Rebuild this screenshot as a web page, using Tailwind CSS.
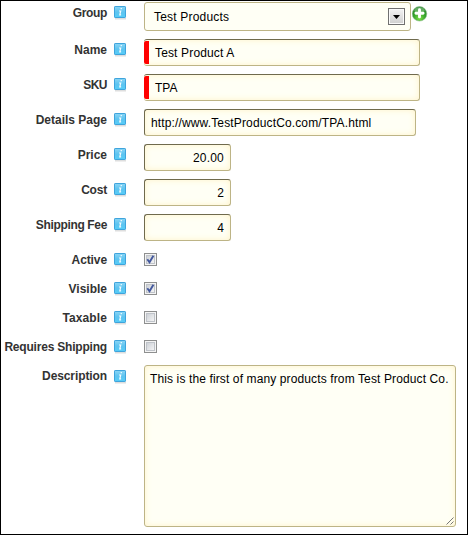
<!DOCTYPE html>
<html lang="en"><head><meta charset="utf-8"><title>Product</title>
<script src="https://cdn.jsdelivr.net/npm/@tailwindcss/browser@4"></script></head>
<body class="bg-white">
<svg class="absolute size-0">
<defs>
<linearGradient id="blue" x1="0" y1="0" x2="0" y2="1"><stop offset="0" stop-color="#8ad5f5"/><stop offset=".5" stop-color="#5fc4f0"/><stop offset="1" stop-color="#55cdf8"/></linearGradient>
<linearGradient id="box" x1="0" y1="0" x2="1" y2="1"><stop offset="0" stop-color="#cbcfd5"/><stop offset="1" stop-color="#f6f6f6"/></linearGradient>
<radialGradient id="green" cx=".5" cy=".8" r=".75"><stop offset="0" stop-color="#7ee04a"/><stop offset=".55" stop-color="#35a12b"/><stop offset="1" stop-color="#2b8a2e"/></radialGradient>
</defs>
<symbol id="info" viewBox="0 0 14 14"><rect x="1" y="12" width="11" height="1.5" fill="#dedede"/><rect x=".5" y=".5" width="11" height="11" rx=".6" fill="url(#blue)" stroke="#3ea4dc"/><path d="M6.6 2.7h1.3M5 5h1.7L5.8 8.9h1.3" fill="none" stroke="#f4fcff" stroke-width="1.2"/></symbol>
<symbol id="check" viewBox="0 0 13 13"><rect x=".5" y=".5" width="12" height="12" fill="#f4f4f4" stroke="#8e8f8f"/><rect x="2.5" y="2.5" width="8" height="8" fill="url(#box)" stroke="#bfc3c9"/></symbol>
<symbol id="tick" viewBox="0 0 13 13"><path d="M3.3 6.3L5.5 9.3L9.4 2.8" fill="none" stroke="#43589d" stroke-width="1.9"/></symbol>
</svg>
<form class="flex h-[535px] w-[468px] flex-col border border-black pt-px font-['Liberation_Sans',Arial,sans-serif] text-[12px] leading-[14px] text-black">
<div class="flex h-[37px] shrink-0"><label class="w-[106px] pt-1 text-right font-bold tracking-[-0.35px] whitespace-nowrap text-[#333]">Group</label><svg class="mt-1 ml-[7px] size-[14px]"><use href="#info"/></svg>
<div class="ml-4 flex h-[29px] w-[267px] items-center justify-between rounded-[3px] border border-[#bdb486] bg-[#fffff5] pr-[5px] pl-[9px]"><span class="tracking-[0.2px]">Test Products</span><span class="flex h-[17px] w-[17px] items-center justify-center border border-[#707070] bg-gradient-to-b from-[#f3f3f3] to-[#cfcfcf] shadow-[inset_0_0_0_1px_#fafafa]"><svg class="mt-px h-1 w-[7px]" viewBox="0 0 7 4"><path d="M0 0h7L3.5 4z"/></svg></span></div>
<svg class="mt-1 ml-px size-4" viewBox="0 0 16 16"><circle cx="7.5" cy="7.8" r="7.3" fill="url(#green)" stroke="#8bb78b" stroke-width=".5"/><ellipse cx="7.5" cy="4.2" rx="5" ry="3" fill="#fff" opacity=".25"/><path d="M7.5 3.7v7.2M3.9 7.3h7.2" stroke="#fff" stroke-width="2.9" stroke-linecap="round"/></svg></div>

<div class="flex h-[35px] shrink-0"><label class="w-[106px] pt-1 text-right font-bold whitespace-nowrap text-[#333]">Name</label><svg class="mt-1 ml-[7px] size-[14px]"><use href="#info"/></svg>
<div class="ml-4 flex h-[27px] w-[276px] items-center rounded-[3px] border border-t-[#6f6a4d] border-r-[#bdb486] border-b-[#bdb486] border-l-0 bg-[#fffff5] shadow-[inset_0_0_6px_#fff3c8]"><span class="h-[23px] w-[5px] shrink-0 rounded-l-[2px] bg-[#f00]"></span><span class="pl-[6px] tracking-[0.15px]">Test Product A</span></div></div>

<div class="flex h-[35px] shrink-0"><label class="w-[106px] pt-1 text-right font-bold tracking-[-0.5px] whitespace-nowrap text-[#333]">SKU</label><svg class="mt-1 ml-[7px] size-[14px]"><use href="#info"/></svg>
<div class="ml-4 flex h-[27px] w-[276px] items-center rounded-[3px] border border-t-[#6f6a4d] border-r-[#bdb486] border-b-[#bdb486] border-l-0 bg-[#fffff5] shadow-[inset_0_0_6px_#fff3c8]"><span class="h-[23px] w-[5px] shrink-0 rounded-l-[2px] bg-[#f00]"></span><span class="pl-[6px]">TPA</span></div></div>

<div class="flex h-[35px] shrink-0"><label class="w-[106px] pt-1 text-right font-bold whitespace-nowrap text-[#333]">Details Page</label><svg class="mt-1 ml-[7px] size-[14px]"><use href="#info"/></svg>
<div class="ml-4 flex h-[27px] w-[272px] items-center rounded-[3px] border border-t-[#6f6a4d] border-r-[#bdb486] border-b-[#bdb486] border-l-[#6f6a4d] bg-[#fffff5] pl-[6px] shadow-[inset_0_0_6px_#fff3c8]"><span class="tracking-[0.14px]">http://www.TestProductCo.com/TPA.html</span></div></div>

<div class="flex h-[35px] shrink-0"><label class="w-[106px] pt-1 text-right font-bold whitespace-nowrap text-[#333]">Price</label><svg class="mt-1 ml-[7px] size-[14px]"><use href="#info"/></svg>
<div class="ml-4 flex h-[27px] w-[87px] items-center justify-end rounded-[3px] border border-t-[#6f6a4d] border-r-[#bdb486] border-b-[#bdb486] border-l-[#6f6a4d] bg-[#fffff5] pr-[6px] shadow-[inset_0_0_6px_#fff3c8]"><span class="tracking-[0.2px]">20.00</span></div></div>

<div class="flex h-[35px] shrink-0"><label class="w-[106px] pt-1 text-right font-bold tracking-[-0.2px] whitespace-nowrap text-[#333]">Cost</label><svg class="mt-1 ml-[7px] size-[14px]"><use href="#info"/></svg>
<div class="ml-4 flex h-[27px] w-[87px] items-center justify-end rounded-[3px] border border-t-[#6f6a4d] border-r-[#bdb486] border-b-[#bdb486] border-l-[#6f6a4d] bg-[#fffff5] pr-[6px] shadow-[inset_0_0_6px_#fff3c8]">2</div></div>

<div class="flex h-[35px] shrink-0"><label class="w-[106px] pt-1 text-right font-bold tracking-[-0.35px] whitespace-nowrap text-[#333]">Shipping Fee</label><svg class="mt-1 ml-[7px] size-[14px]"><use href="#info"/></svg>
<div class="ml-4 flex h-[27px] w-[87px] items-center justify-end rounded-[3px] border border-t-[#6f6a4d] border-r-[#bdb486] border-b-[#bdb486] border-l-[#6f6a4d] bg-[#fffff5] pr-[6px] shadow-[inset_0_0_6px_#fff3c8]">4</div></div>

<div class="flex h-[29px] shrink-0"><label class="w-[106px] pt-1 text-right font-bold tracking-[-0.1px] whitespace-nowrap text-[#333]">Active</label><svg class="mt-1 ml-[7px] size-[14px]"><use href="#info"/></svg><svg class="mt-1 ml-4 size-[13px]"><use href="#check"/><use href="#tick"/></svg></div>
<div class="flex h-[29px] shrink-0"><label class="w-[106px] pt-1 text-right font-bold whitespace-nowrap text-[#333]">Visible</label><svg class="mt-1 ml-[7px] size-[14px]"><use href="#info"/></svg><svg class="mt-1 ml-4 size-[13px]"><use href="#check"/><use href="#tick"/></svg></div>
<div class="flex h-[29px] shrink-0"><label class="w-[106px] pt-1 text-right font-bold tracking-[0.1px] whitespace-nowrap text-[#333]">Taxable</label><svg class="mt-1 ml-[7px] size-[14px]"><use href="#info"/></svg><svg class="mt-1 ml-4 size-[13px]"><use href="#check"/></svg></div>
<div class="flex h-[29px] shrink-0"><label class="w-[106px] pt-1 text-right font-bold tracking-[-0.2px] whitespace-nowrap text-[#333]">Requires Shipping</label><svg class="mt-1 ml-[7px] size-[14px]"><use href="#info"/></svg><svg class="mt-1 ml-4 size-[13px]"><use href="#check"/></svg></div>

<div class="flex h-[162px] shrink-0"><label class="w-[106px] pt-1 text-right font-bold tracking-[-0.1px] whitespace-nowrap text-[#333]">Description</label><svg class="mt-[5px] ml-[7px] size-[14px]"><use href="#info"/></svg>
<div class="ml-4 flex h-[162px] w-[312px] flex-col justify-between rounded-[3px] border border-[#bdb486] bg-[#fffff5] pt-[6px] pl-[5px] shadow-[inset_0_0_6px_#fff3c8]"><span class="tracking-[0.12px] whitespace-nowrap">This is the first of many products from Test Product Co.</span><svg class="mr-px mb-px size-2 self-end" viewBox="0 0 8 8"><path d="M.5 7.5l7-7M4.5 7.5l3-3" stroke="#777" fill="none"/></svg></div></div>
</form></body></html>
